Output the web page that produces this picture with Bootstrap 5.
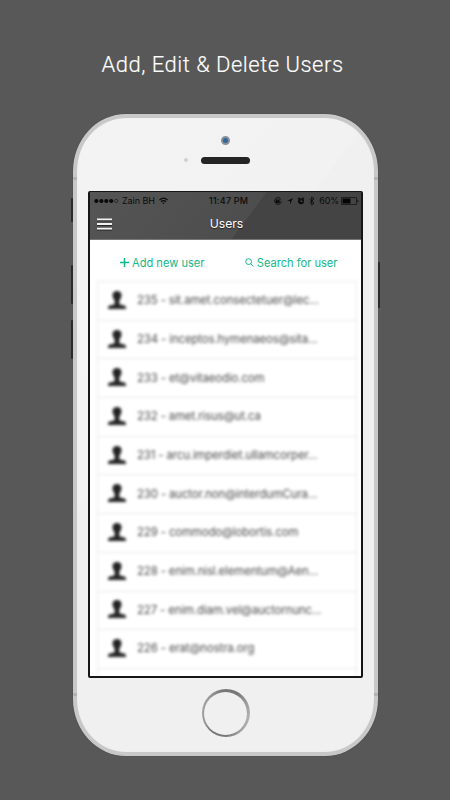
<!DOCTYPE html>
<html lang="en">
<head>
<meta charset="utf-8">
<meta name="viewport" content="width=device-width, initial-scale=1">
<title>Add, Edit &amp; Delete Users</title>
<link href="https://cdn.jsdelivr.net/npm/bootstrap@5.3.0/dist/css/bootstrap.min.css" rel="stylesheet">
<style>
body{background:#585858;font-family:Inter,"Liberation Sans",sans-serif;height:800px;overflow:hidden}
.headline{height:114px;padding:49px 5px 0 0;font:300 22px/32px Roboto,sans-serif;color:#fff;white-space:nowrap;-webkit-text-stroke:.15px #fff}
.headline span{letter-spacing:.5px}
.phone{width:305px;height:641.5px;margin-left:73px;background:linear-gradient(126.7deg,#f3f3f3 0,#f2f2f2 38%,#f0f0f0 38.3%);background-origin:border-box;border:4px solid #c8c8c8;border-radius:53px/57px;box-shadow:0 0 1px #333,inset 0 0 1px #ddd}
.side{position:absolute;background:#292929;width:2px;border-radius:1px}
.seam{position:absolute;width:4px;height:3px;background:#b3b3b3}
.top-bezel{height:73px;padding-top:18px}
.camera{width:9px;height:9px;background:#34659a;border:2px solid #899099}
.speaker{width:49px;height:7px;background:#242424;margin-top:11.5px}
.sensor{position:absolute;left:107px;top:40px;width:4px;height:4px;background:#d0d0d0}
.screen{width:275px;height:487px;margin-left:11px;background:#fff;border:2px solid #171517;border-top-width:1px;border-radius:2px}
.app-head{height:48px;background:linear-gradient(126.7deg,rgba(255,255,255,.09) 0,rgba(255,255,255,.05) 57.6%,transparent 57.9%),#444;border-bottom:1px solid #777}
.status{height:17px;font-size:9px;line-height:17px;color:#0b0b0b;padding:0 2px 0 4px}
.status>*{flex:none}
.clock{left:119px;letter-spacing:.2px;font-weight:500}
.bar{height:30px;padding-left:7px}
.bar-title{font-size:12.2px;line-height:30px;color:#fff;left:2px;right:0;text-shadow:0 1px 1px #222}
.actions{height:41px;padding:6px 23.500px 2px 30px;font-size:11.1px;line-height:32px}
.actions a{color:#0fb889;text-decoration:none;white-space:nowrap}
.users{width:260px;margin-left:7px;filter:blur(1.5px)}
.users .list-group-item{height:38.7px;padding:0 0 0 10px;border:1px solid #e9e9e9;border-bottom:0;font-size:11.4px;letter-spacing:-.12px;color:#4a4a4a;white-space:nowrap;border-radius:0}
.users .list-group-item:last-child{height:12px;border-bottom:0}
.users svg{margin:0 11px 2px 0}
.home{width:48px;height:48px;margin:11px 0 0 124.5px;padding:2.5px;background:linear-gradient(105deg,#aaa 5%,#777 35%,#777 60%,#c4c4c4)}
.home div{background:#f0f0f0}
</style>
<script src="https://cdn.jsdelivr.net/npm/bootstrap@5.3.0/dist/js/bootstrap.bundle.min.js"></script>
</head>
<body>
<h1 class="headline text-center m-0"><span id="headline">Add, Edit &amp; Delete Users</span></h1>
<i class="side" style="left:71px;top:198px;height:24px"></i>
<i class="side" style="left:71px;top:265px;height:39px"></i>
<i class="side" style="left:71px;top:320px;height:39px"></i>
<i class="side" style="left:377px;top:262px;height:46px;width:3px"></i>
<i class="side" style="left:128px;top:754px;height:2px;width:10px"></i>
<main class="phone position-relative">
  <i class="seam" style="left:-4px;top:59px"></i><i class="seam" style="right:-4px;top:59px"></i>
  <i class="seam" style="left:-4px;top:575px"></i><i class="seam" style="right:-4px;top:575px"></i>
  <div class="top-bezel d-flex flex-column align-items-center">
    <div class="camera rounded-circle"></div><div class="speaker rounded-pill"></div><i class="sensor rounded-circle"></i>
  </div>
  <section class="screen overflow-hidden">
    <header class="app-head">
      <div class="status d-flex align-items-center position-relative">
        <svg width="25" height="6" fill="#090909"><circle cx="2.4" cy="3" r="2.1"/><circle cx="7.4" cy="3" r="2.1"/><circle cx="12.3" cy="3" r="2.1"/><circle cx="17.2" cy="3" r="2.1"/><circle cx="22.2" cy="3" r="1.7" fill="none" stroke="#111" stroke-width=".6"/></svg>
        <span style="margin-left:3px;letter-spacing:-.05px">Zain BH</span>
        <svg class="ms-1" width="9" height="8" fill="none" stroke="#0b0b0b" stroke-width="1.2"><path d="M.5 3Q4.5-.6 8.5 3M2 4.7Q4.500 2.500 7 4.700"/><path d="M3.200 5.800h2.600L4.500 7.200Z" fill="#0b0b0b" stroke="none"/></svg>
        <span class="clock position-absolute">11:47 PM</span>
        <svg class="ms-auto" width="43" height="10" fill="none" stroke="#0b0b0b" stroke-width=".8">
          <path d="M6.900 1.900A3.500 3.500 0 1 0 7 7.900M7 2v2.200M8.200 5A3.600 3.600 0 0 1 7 7.900"/><path d="M2.900 4.700h3.400v2H2.900Z" fill="#0b0b0b"/><path d="M3.500 4.800V3.700q1-1 2 0v1"/>
          <path d="M20 2L14 5h3v3.200Z" fill="#0b0b0b" stroke="none"/>
          <circle cx="28" cy="5.300" r="3" fill="#0b0b0b" stroke="none"/><path d="M24.900 3l1.700-1.400M31.100 3l-1.700-1.400" stroke-width="1.200"/><path d="M28 3.800v1.800h1.600" stroke="#777" stroke-width=".6"/>
          <path d="M36.500 3l4.500 4.200L38.700 9V1L41 2.800 36.500 7" stroke-width=".9"/>
        </svg>
        <span style="margin-left:3px;letter-spacing:-.1px">60%</span>
        <svg style="margin-left:2px" width="18" height="8"><path d="M.5.500h15v7H.5Z" fill="none" stroke="#151515" stroke-width=".8"/><path d="M1.500 1.500h8v5h-8ZM16.500 2.500q2 1.500 0 3Z" fill="#050505"/></svg>
      </div>
      <div class="bar position-relative">
        <svg class="d-block" width="17" height="30" fill="none"><path d="M0 11.800h15M0 16.400h15M0 21h15" stroke="#222" stroke-width="1"/><path d="M0 10.400h15M0 15h15M0 19.600h15" stroke="#f2f2f2" stroke-width="1.900"/></svg>
        <div class="bar-title position-absolute top-0 text-center">Users</div>
      </div>
    </header>
    <div class="actions d-flex justify-content-between">
      <a href="#" class="d-flex align-items-center"><svg width="9" height="9" style="margin-right:3px" stroke="#0fb889" stroke-width="1.500"><path d="M4.500 0v9M0 4.500h9"/></svg><span>Add new user</span></a>
      <a href="#" class="d-flex align-items-center"><svg width="9" height="9" style="margin-right:3px" fill="none" stroke="#0fb889"><circle cx="3.600" cy="3.600" r="2.900"/><path d="M5.700 5.700 8.500 8.500"/></svg><span>Search for user</span></a>
    </div>
    <svg class="d-none"><symbol id="person" viewBox="0 0 18 18"><path d="M9 0C6 0 4.500 1.800 4.500 4.300 4.500 7 6 8.500 6.600 9.500v3.700C5.500 14.300 0 13.800 0 16.500V18h18v-1.500c0-2.700-5.500-2.200-6.600-3.300V9.500c.6-1 2.100-2.500 2.100-5.200C13.500 1.800 12 0 9 0Z" fill="#222"/></symbol></svg>
    <ul class="users list-group" id="users"></ul>
  </section>
  <div class="home rounded-circle"><div class="w-100 h-100 rounded-circle"></div></div>
</main>
<script>
const users=["235 - sit.amet.consectetuer@lec...","234 - inceptos.hymenaeos@sita...","233 - et@vitaeodio.com","232 - amet.risus@ut.ca","231 - arcu.imperdiet.ullamcorper...","230 - auctor.non@interdumCura...","229 - commodo@lobortis.com","228 - enim.nisl.elementum@Aen...","227 - enim.diam.vel@auctornunc...","226 - erat@nostra.org"];
document.getElementById("users").innerHTML=users.map(u=>`<li class="list-group-item d-flex align-items-center"><svg width="18" height="18"><use href="#person"/></svg><span>${u}</span></li>`).join("")+'<li class="list-group-item"></li>';
</script>
</body>
</html>
